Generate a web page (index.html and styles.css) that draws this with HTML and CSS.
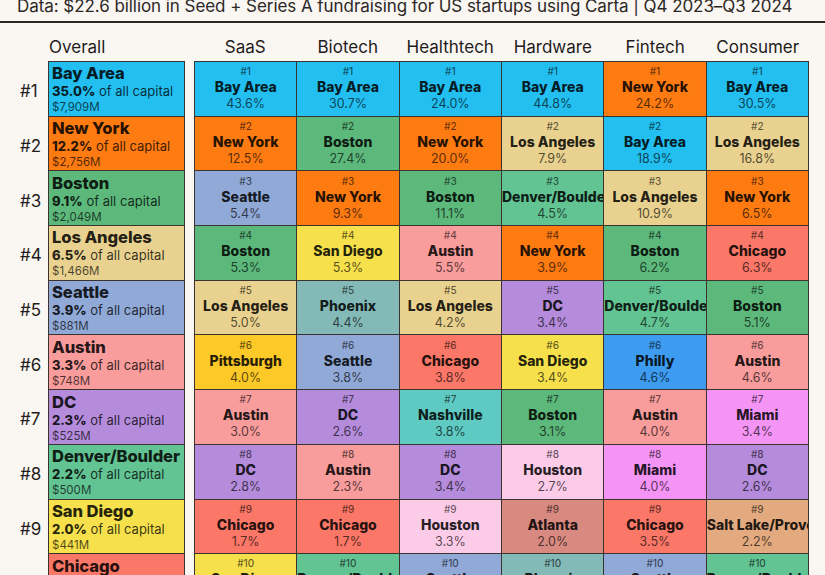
FILE: index.html
```html
<!DOCTYPE html>
<html lang="en">
<head>
<meta charset="utf-8">
<title>Top cities for Seed + Series A fundraising</title>
<link rel="stylesheet" href="styles.css">
</head>
<body>
<div class="title">Data: $22.6 billion in Seed + Series A fundraising for US startups using Carta | Q4 2023–Q3 2024</div>
<div class="rule"></div>
<div class="table">
  <div class="heads">
    <div class="h-rank"></div>
    <div class="h-overall">Overall</div>
    <div class="h-gap"></div>
    <div class="h">SaaS</div>
    <div class="h">Biotech</div>
    <div class="h">Healthtech</div>
    <div class="h">Hardware</div>
    <div class="h">Fintech</div>
    <div class="h">Consumer</div>
  </div>
  <div class="body">
    <div class="ranks">
      <div class="rank">#1</div><div class="rank">#2</div><div class="rank">#3</div><div class="rank">#4</div><div class="rank">#5</div>
      <div class="rank">#6</div><div class="rank">#7</div><div class="rank">#8</div><div class="rank">#9</div><div class="rank">#10</div>
    </div>
    <div class="overall">
      <div class="ov bay"><div class="name">Bay Area</div><div class="pct"><b>35.0%</b> of all capital</div><div class="amt">$7,909M</div></div>
      <div class="ov ny"><div class="name">New York</div><div class="pct"><b>12.2%</b> of all capital</div><div class="amt">$2,756M</div></div>
      <div class="ov bos"><div class="name">Boston</div><div class="pct"><b>9.1%</b> of all capital</div><div class="amt">$2,049M</div></div>
      <div class="ov la"><div class="name">Los Angeles</div><div class="pct"><b>6.5%</b> of all capital</div><div class="amt">$1,466M</div></div>
      <div class="ov sea"><div class="name">Seattle</div><div class="pct"><b>3.9%</b> of all capital</div><div class="amt">$881M</div></div>
      <div class="ov aus"><div class="name">Austin</div><div class="pct"><b>3.3%</b> of all capital</div><div class="amt">$748M</div></div>
      <div class="ov dc"><div class="name">DC</div><div class="pct"><b>2.3%</b> of all capital</div><div class="amt">$525M</div></div>
      <div class="ov den"><div class="name">Denver/Boulder</div><div class="pct"><b>2.2%</b> of all capital</div><div class="amt">$500M</div></div>
      <div class="ov sd"><div class="name">San Diego</div><div class="pct"><b>2.0%</b> of all capital</div><div class="amt">$441M</div></div>
      <div class="ov chi"><div class="name">Chicago</div><div class="pct"><b>1.9%</b> of all capital</div><div class="amt">$430M</div></div>
    </div>
    <div class="grid">
      <div class="c bay"><div class="n">#1</div><div class="city">Bay Area</div><div class="p">43.6%</div></div>
      <div class="c bay"><div class="n">#1</div><div class="city">Bay Area</div><div class="p">30.7%</div></div>
      <div class="c bay"><div class="n">#1</div><div class="city">Bay Area</div><div class="p">24.0%</div></div>
      <div class="c bay"><div class="n">#1</div><div class="city">Bay Area</div><div class="p">44.8%</div></div>
      <div class="c ny"><div class="n">#1</div><div class="city">New York</div><div class="p">24.2%</div></div>
      <div class="c bay"><div class="n">#1</div><div class="city">Bay Area</div><div class="p">30.5%</div></div>

      <div class="c ny"><div class="n">#2</div><div class="city">New York</div><div class="p">12.5%</div></div>
      <div class="c bos"><div class="n">#2</div><div class="city">Boston</div><div class="p">27.4%</div></div>
      <div class="c ny"><div class="n">#2</div><div class="city">New York</div><div class="p">20.0%</div></div>
      <div class="c la"><div class="n">#2</div><div class="city">Los Angeles</div><div class="p">7.9%</div></div>
      <div class="c bay"><div class="n">#2</div><div class="city">Bay Area</div><div class="p">18.9%</div></div>
      <div class="c la"><div class="n">#2</div><div class="city">Los Angeles</div><div class="p">16.8%</div></div>

      <div class="c sea"><div class="n">#3</div><div class="city">Seattle</div><div class="p">5.4%</div></div>
      <div class="c ny"><div class="n">#3</div><div class="city">New York</div><div class="p">9.3%</div></div>
      <div class="c bos"><div class="n">#3</div><div class="city">Boston</div><div class="p">11.1%</div></div>
      <div class="c den"><div class="n">#3</div><div class="city">Denver/Boulder</div><div class="p">4.5%</div></div>
      <div class="c la"><div class="n">#3</div><div class="city">Los Angeles</div><div class="p">10.9%</div></div>
      <div class="c ny"><div class="n">#3</div><div class="city">New York</div><div class="p">6.5%</div></div>

      <div class="c bos"><div class="n">#4</div><div class="city">Boston</div><div class="p">5.3%</div></div>
      <div class="c sd"><div class="n">#4</div><div class="city">San Diego</div><div class="p">5.3%</div></div>
      <div class="c aus"><div class="n">#4</div><div class="city">Austin</div><div class="p">5.5%</div></div>
      <div class="c ny"><div class="n">#4</div><div class="city">New York</div><div class="p">3.9%</div></div>
      <div class="c bos"><div class="n">#4</div><div class="city">Boston</div><div class="p">6.2%</div></div>
      <div class="c chi"><div class="n">#4</div><div class="city">Chicago</div><div class="p">6.3%</div></div>

      <div class="c la"><div class="n">#5</div><div class="city">Los Angeles</div><div class="p">5.0%</div></div>
      <div class="c phx"><div class="n">#5</div><div class="city">Phoenix</div><div class="p">4.4%</div></div>
      <div class="c la"><div class="n">#5</div><div class="city">Los Angeles</div><div class="p">4.2%</div></div>
      <div class="c dc"><div class="n">#5</div><div class="city">DC</div><div class="p">3.4%</div></div>
      <div class="c den"><div class="n">#5</div><div class="city">Denver/Boulder</div><div class="p">4.7%</div></div>
      <div class="c bos"><div class="n">#5</div><div class="city">Boston</div><div class="p">5.1%</div></div>

      <div class="c pit"><div class="n">#6</div><div class="city">Pittsburgh</div><div class="p">4.0%</div></div>
      <div class="c sea"><div class="n">#6</div><div class="city">Seattle</div><div class="p">3.8%</div></div>
      <div class="c chi"><div class="n">#6</div><div class="city">Chicago</div><div class="p">3.8%</div></div>
      <div class="c sd"><div class="n">#6</div><div class="city">San Diego</div><div class="p">3.4%</div></div>
      <div class="c phl"><div class="n">#6</div><div class="city">Philly</div><div class="p">4.6%</div></div>
      <div class="c aus"><div class="n">#6</div><div class="city">Austin</div><div class="p">4.6%</div></div>

      <div class="c aus"><div class="n">#7</div><div class="city">Austin</div><div class="p">3.0%</div></div>
      <div class="c dc"><div class="n">#7</div><div class="city">DC</div><div class="p">2.6%</div></div>
      <div class="c nash"><div class="n">#7</div><div class="city">Nashville</div><div class="p">3.8%</div></div>
      <div class="c bos"><div class="n">#7</div><div class="city">Boston</div><div class="p">3.1%</div></div>
      <div class="c aus"><div class="n">#7</div><div class="city">Austin</div><div class="p">4.0%</div></div>
      <div class="c mia"><div class="n">#7</div><div class="city">Miami</div><div class="p">3.4%</div></div>

      <div class="c dc"><div class="n">#8</div><div class="city">DC</div><div class="p">2.8%</div></div>
      <div class="c aus"><div class="n">#8</div><div class="city">Austin</div><div class="p">2.3%</div></div>
      <div class="c dc"><div class="n">#8</div><div class="city">DC</div><div class="p">3.4%</div></div>
      <div class="c hou"><div class="n">#8</div><div class="city">Houston</div><div class="p">2.7%</div></div>
      <div class="c mia"><div class="n">#8</div><div class="city">Miami</div><div class="p">4.0%</div></div>
      <div class="c dc"><div class="n">#8</div><div class="city">DC</div><div class="p">2.6%</div></div>

      <div class="c chi"><div class="n">#9</div><div class="city">Chicago</div><div class="p">1.7%</div></div>
      <div class="c chi"><div class="n">#9</div><div class="city">Chicago</div><div class="p">1.7%</div></div>
      <div class="c hou"><div class="n">#9</div><div class="city">Houston</div><div class="p">3.3%</div></div>
      <div class="c atl"><div class="n">#9</div><div class="city">Atlanta</div><div class="p">2.0%</div></div>
      <div class="c chi"><div class="n">#9</div><div class="city">Chicago</div><div class="p">3.5%</div></div>
      <div class="c slc"><div class="n">#9</div><div class="city">Salt Lake/Provo</div><div class="p">2.2%</div></div>

      <div class="c sd"><div class="n">#10</div><div class="city">San Diego</div><div class="p">1.5%</div></div>
      <div class="c den"><div class="n">#10</div><div class="city">Denver/Boulder</div><div class="p">1.6%</div></div>
      <div class="c sea"><div class="n">#10</div><div class="city">Seattle</div><div class="p">3.0%</div></div>
      <div class="c phx"><div class="n">#10</div><div class="city">Phoenix</div><div class="p">1.9%</div></div>
      <div class="c sea"><div class="n">#10</div><div class="city">Seattle</div><div class="p">3.4%</div></div>
      <div class="c den"><div class="n">#10</div><div class="city">Denver/Boulder</div><div class="p">2.1%</div></div>
    </div>
  </div>
</div>
</body>
</html>
```
FILE: styles.css
```css
html, body {
  margin: 0;
  padding: 0;
  height: 575px;
  overflow: hidden;
  background: #faf6f2;
}
body {
  font-family: Inter, "Noto Sans", sans-serif;
  color: #1f1c1b;
}
.title {
  margin: -4px 0 0 17px;
  font-size: 17px;
  line-height: 20px;
  letter-spacing: -0.06px;
  white-space: nowrap;
  color: #2b2826;
}
.rule {
  height: 2px;
  margin-top: 5px;
  background: #2b2622;
}
.table {
  width: 809px;
}
.heads {
  display: grid;
  grid-template-columns: 48px 137px 9px repeat(6, 1fr);
  height: 38px;
  box-sizing: border-box;
  padding-bottom: 4px;
  align-items: end;
  font-size: 17px;
  line-height: 20px;
  color: #1f1c1b;
}
.h-overall {
  padding-left: 1px;
}
.h {
  text-align: center;
  white-space: nowrap;
}
.body {
  display: flex;
  align-items: flex-start;
}
.ranks {
  width: 48px;
  flex: none;
  display: flex;
  flex-direction: column;
  padding-top: 1px;
}
.rank {
  height: 54.7px;
  box-sizing: border-box;
  padding: 4px 0 0 20px;
  display: flex;
  align-items: center;
  font-size: 17px;
  color: #1f1c1b;
}
.overall {
  width: 137px;
  flex: none;
  box-sizing: border-box;
  border: 1px solid #3a3330;
  background: #3a3330;
  display: grid;
  grid-auto-rows: 53.7px;
  gap: 1px;
}
.ov {
  padding: 2.4px 0 0 3px;
  overflow: hidden;
  white-space: nowrap;
  color: rgba(0, 0, 0, 0.86);
}
.ov .name {
  font-size: 16.6px;
  line-height: 18px;
  font-weight: 800;
  letter-spacing: -0.1px;
}
.ov .pct {
  font-size: 13px;
  line-height: 18px;
  color: rgba(0, 0, 0, 0.78);
}
.ov .pct b {
  font-weight: 800;
  color: rgba(0, 0, 0, 0.86);
}
.ov .amt {
  font-size: 11.5px;
  line-height: 15px;
  color: rgba(0, 0, 0, 0.7);
}
.grid {
  flex: 1;
  margin-left: 9px;
  box-sizing: border-box;
  border: 1px solid #3a3330;
  background: #3a3330;
  display: grid;
  grid-template-columns: repeat(6, 1fr);
  grid-auto-rows: 53.7px;
  gap: 1px;
}
.c {
  padding-top: 3.3px;
  text-align: center;
  overflow: hidden;
  white-space: nowrap;
}
.c .n {
  font-size: 10px;
  line-height: 13px;
  font-weight: 500;
  color: rgba(0, 0, 0, 0.6);
}
.c .city {
  font-size: 14px;
  line-height: 18px;
  font-weight: 800;
  color: rgba(0, 0, 0, 0.86);
}
.c .p {
  font-size: 12.5px;
  line-height: 16px;
  color: rgba(0, 0, 0, 0.68);
}
.bay { background: #22bff0; }
.ny { background: #fe7b12; }
.bos { background: #5cb87b; }
.la { background: #e9d28f; }
.sea { background: #90a9d6; }
.aus { background: #f89c9c; }
.dc { background: #b58cdb; }
.den { background: #62c393; }
.sd { background: #f6e04c; }
.chi { background: #fb7767; }
.pit { background: #fdc927; }
.phx { background: #83b9b7; }
.nash { background: #5ecac2; }
.hou { background: #fccbe8; }
.atl { background: #d98a80; }
.phl { background: #3d9bf0; }
.mia { background: #f494f5; }
.slc { background: #e3aa7f; }
```
